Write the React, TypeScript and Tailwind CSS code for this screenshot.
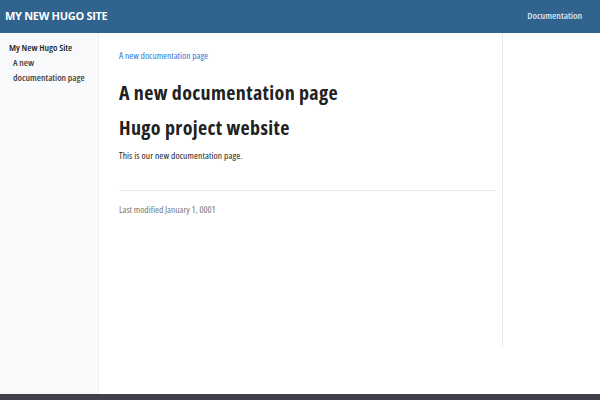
import React from 'react';

const App: React.FC = () => {
  return (
    <div className="h-[400px] w-[600px] flex flex-col overflow-hidden bg-white font-['Open_Sans',sans-serif] font-stretch-[75%]">
      <header className="h-[33px] shrink-0 bg-[#30638e] flex items-center justify-between pl-[5px] pr-[18px]">
        <span className="text-white font-bold text-[11px] font-stretch-[100%] tracking-[-0.3px]">MY NEW HUGO SITE</span>
        <span className="text-[#dfe6ee] font-semibold text-[9.7px]">Documentation</span>
      </header>

      <div className="flex flex-1 min-h-0">
        <aside className="w-[99px] shrink-0 bg-[#f8f9fa] border-r border-[#eef0f2] pl-[9px] pt-[7px]">
          <div className="text-[9.5px] font-semibold text-[#222] leading-[15px] whitespace-nowrap">My New Hugo Site</div>
          <div className="pl-[4px] text-[9.5px] font-semibold text-[#444] leading-[15px] whitespace-nowrap">
            A new
            <br />
            documentation page
          </div>
        </aside>

        <main className="flex-1 flex">
          <div className="w-[404px] h-[313px] border-r border-[#e9ecef] pl-[20px] pr-[7px] pt-[17px]">
            <div className="text-[9.5px] text-[#3176d9] leading-[12px]">A new documentation page</div>
            <h1 className="mt-[13px] text-[20px] font-bold text-[#222] leading-[35px] tracking-[0.37px]">
              A new documentation page
              <br />
              Hugo project website
            </h1>
            <p className="mt-[5px] text-[9.5px] text-[#222] leading-[12px] tracking-[0.1px]">This is our new documentation page.</p>
            <hr className="mt-[28px] border-[#e4e6e8]" />
            <div className="mt-[13px] text-[9.5px] text-[#777] leading-[12px]">Last modified January 1, 0001</div>
          </div>
          <div className="flex-1" />
        </main>
      </div>

      <footer className="h-[6px] shrink-0 bg-[#403f4c]" />
    </div>
  );
};

export default App;
